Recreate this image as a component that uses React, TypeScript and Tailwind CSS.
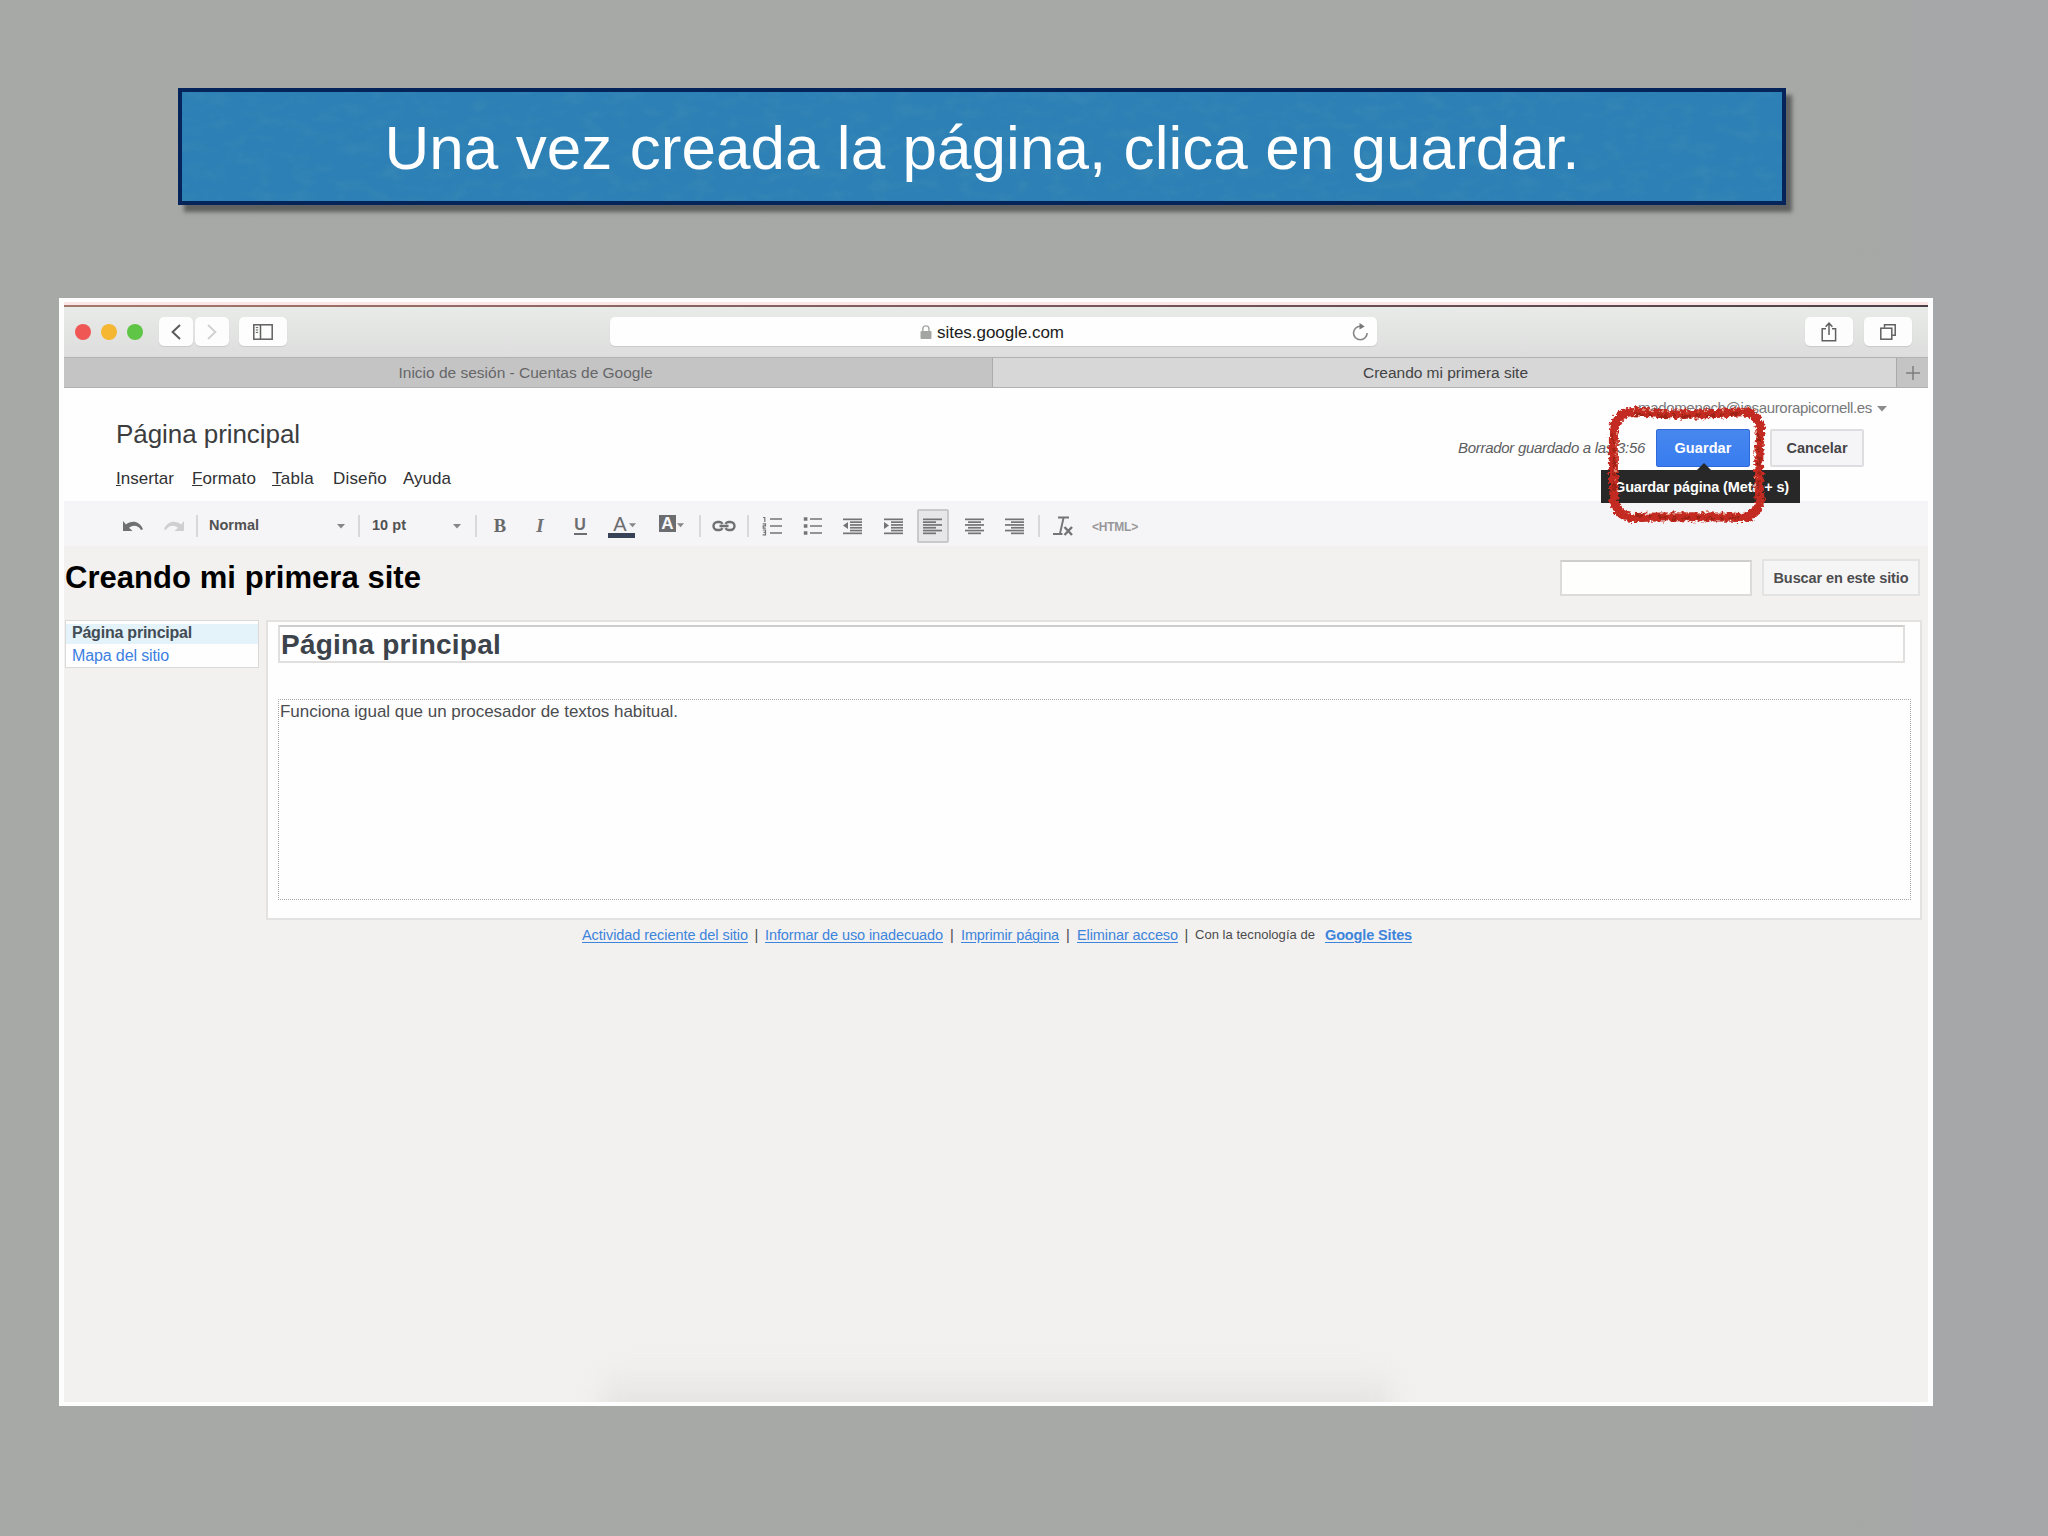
import { useLayoutEffect, useRef, useState } from "react";
import type { ReactNode } from "react";

/** Single-line label whose tracking is tuned so the text spans exactly `w` pixels. */
function Label({ w, className = "", children }: { w: number; className?: string; children: ReactNode }) {
  const ref = useRef<HTMLSpanElement>(null);
  const [tracking, setTracking] = useState(0);
  useLayoutEffect(() => {
    const el = ref.current;
    if (!el) return;
    const natural = el.getBoundingClientRect().width;
    const count = (el.textContent || "").length;
    setTracking((w - natural) / count);
  }, [w]);
  return (
    <span ref={ref} className={"inline-block shrink-0 whitespace-pre " + className} style={{ letterSpacing: tracking + "px" }}>
      {children}
    </span>
  );
}

function Sep({ className = "" }: { className?: string }) {
  return <div className={"h-[22px] w-[2px] shrink-0 bg-[#d8d7da] " + className} />;
}

function Caret({ className = "" }: { className?: string }) {
  return (
    <svg viewBox="0 0 8 5" className={"h-[5px] w-2 shrink-0 " + className}>
      <path d="M0 0h8L4 4.6z" fill="#868688" />
    </svg>
  );
}

function Lines({ rows, className = "" }: { rows: [number, number][]; className?: string }) {
  return (
    <svg viewBox="0 0 20 18" className={"h-[18px] w-5 shrink-0 " + className}>
      {rows.map(([x, w], i) => (
        <rect key={i} x={x} y={1.5 + i * 2.8} width={w} height="1.7" fill="#747477" />
      ))}
    </svg>
  );
}

function Banner() {
  return (
    <div className="relative ml-[178px] mt-[88px] flex h-[117px] w-[1608px] shrink-0 justify-center border-4 border-[#05255a] bg-[#2d80b5] shadow-[6px_7px_4px_rgba(72,74,74,0.75)]">
      <svg className="absolute inset-0 h-full w-full">
        <filter id="paper" x="0" y="0" width="100%" height="100%">
          <feTurbulence type="fractalNoise" baseFrequency="0.045 0.08" numOctaves="4" seed="8" />
          <feColorMatrix values="0 0 0 0 0.05  0 0 0 0 0.27  0 0 0 0 0.47  2.6 0 0 0 -1.15" />
        </filter>
        <rect width="100%" height="100%" filter="url(#paper)" opacity="0.36" />
      </svg>
      <h1 className="relative text-[62px] leading-[111px] text-white">
        <Label w={1195}>Una vez creada la página, clica en guardar.</Label>
      </h1>
    </div>
  );
}

function SafariBar() {
  return (
    <div className="flex h-[50px] shrink-0 items-start bg-gradient-to-b from-[#e9ebe9] to-[#dcdddc] pl-[11px] pt-[10px]">
      <div className="mt-[7px] flex gap-[10px]">
        <div className="size-4 rounded-full bg-[#ee5754]" />
        <div className="size-4 rounded-full bg-[#f5b731]" />
        <div className="size-4 rounded-full bg-[#5fc546]" />
      </div>
      <div className="ml-4 flex gap-[2px]">
        <div className="flex h-[29px] w-[34px] items-center justify-center rounded-[5px] bg-[#fcfdfc] shadow-[0_1px_1px_#c9cac9]">
          <svg viewBox="0 0 10 16" className="h-4 w-[10px]">
            <path d="M9 1 1.6 8 9 15" fill="none" stroke="#5a5b5a" strokeWidth="2" />
          </svg>
        </div>
        <div className="flex h-[29px] w-[34px] items-center justify-center rounded-[5px] bg-[#fcfdfc] shadow-[0_1px_1px_#c9cac9]">
          <svg viewBox="0 0 10 16" className="h-4 w-[10px]">
            <path d="M1 1 8.4 8 1 15" fill="none" stroke="#cfd0cf" strokeWidth="1.8" />
          </svg>
        </div>
      </div>
      <div className="ml-[10px] flex h-[29px] w-12 items-center justify-center rounded-[5px] bg-[#fcfdfc] shadow-[0_1px_1px_#c9cac9]">
        <svg viewBox="0 0 20 16" className="h-4 w-5" fill="none" stroke="#5f605f" strokeWidth="1.5">
          <rect x="0.8" y="0.8" width="18.4" height="14.4" />
          <path d="M7.5 1v14" />
          <path d="M2.8 3.600h2.400M2.800 6h2.400M2.800 8.400h2.400" strokeWidth="1" />
        </svg>
      </div>
      <div className="ml-[323px] flex h-[29px] w-[767px] items-start rounded-[5px] bg-[#fdfefd] shadow-[0_1px_1px_#c9cac9]">
        <svg viewBox="0 0 12 14" className="ml-[310px] mt-2 h-[14px] w-3">
          <path d="M2.8 7V4a3.1 3.1 0 0 1 6.2 0v3" fill="none" stroke="#a3a5a3" strokeWidth="1.4" />
          <rect x="0.5" y="6" width="11" height="8" rx="1" fill="#a3a5a3" />
        </svg>
        <Label w={127} className="ml-[5px] text-[17px] leading-8 text-[#1c1c1c]">
          sites.google.com
        </Label>
        <svg viewBox="0 0 16 18" className="ml-[288px] mt-[6px] h-[18px] w-4">
          <path d="M8.3 3.2a6.8 6.8 0 1 0 6.8 6.8" fill="none" stroke="#858785" strokeWidth="1.6" />
          <path d="M7.5 0v6.6l5.2-3.2z" fill="#777977" />
        </svg>
      </div>
      <div className="ml-[428px] flex h-[29px] w-12 items-center justify-center rounded-[5px] bg-[#fcfdfc] shadow-[0_1px_1px_#c9cac9]">
        <svg viewBox="0 0 16 20" className="h-5 w-4" fill="none" stroke="#5f605f" strokeWidth="1.5">
          <path d="M5 6.8H1.2v12h13.4v-12H11M8 13V1.5M4.6 4.8 8 1.2l3.4 3.6" />
        </svg>
      </div>
      <div className="ml-[11px] flex h-[29px] w-12 items-center justify-center rounded-[5px] bg-[#fcfdfc] shadow-[0_1px_1px_#c9cac9]">
        <svg viewBox="0 0 16 16" className="size-4" fill="none" stroke="#5f605f" strokeWidth="1.5">
          <rect x="0.8" y="4.2" width="11" height="11" />
          <path d="M4.5 3.8V.8h10.7v10.4h-3" />
        </svg>
      </div>
    </div>
  );
}

function TabStrip() {
  return (
    <div className="flex h-[31px] shrink-0 border-y border-[#b1b1b2] text-[15.5px] leading-[29px]">
      <div className="flex w-[929px] justify-center border-r border-[#acacad] bg-[#c4c4c5] pr-[5px] text-[#666768]">
        <Label w={254}>Inicio de sesión - Cuentas de Google</Label>
      </div>
      <div className="flex w-[904px] justify-center border-r border-[#a9a9aa] bg-[#d7d7d8] pl-[2px] text-[#434344]">
        <Label w={165}>Creando mi primera site</Label>
      </div>
      <div className="flex w-[31px] items-center justify-center bg-[#c4c4c5]">
        <svg viewBox="0 0 14 14" className="size-[14px]">
          <path d="M7 0v14M0 7h14" stroke="#7d7d7e" strokeWidth="1.5" />
        </svg>
      </div>
    </div>
  );
}

function EditorHeader() {
  return (
    <div className="relative flex h-[113px] shrink-0 justify-between bg-[#fefefe]">
      <div className="flex flex-col pl-[52px]">
        <Label w={184} className="mt-[30px] self-start text-[26px] leading-8 text-[#3b3d3f]">
          Página principal
        </Label>
        <div className="mt-[18px] flex text-[17px] leading-[22px] text-[#303133]">
          <Label w={58} className="mr-[18px]"><u>I</u>nsertar</Label>
          <Label w={64} className="mr-[16px]"><u>F</u>ormato</Label>
          <Label w={42} className="mr-[19px]"><u>T</u>abla</Label>
          <Label w={54} className="mr-[16px]">Diseño</Label>
          <Label w={48}>Ayuda</Label>
        </div>
      </div>
      <div className="flex flex-col items-end">
        <div className="mr-[41px] mt-[10px] flex h-5 items-center text-[15px] leading-5 text-[#77787a]">
          <Label w={234}>madomenech@iesaurorapicornell.es</Label>
          <svg viewBox="0 0 10 6" className="ml-[5px] mt-[1px] h-[6px] w-[10px]">
            <path d="M0 0h10L5 5.6z" fill="#8c8c8e" />
          </svg>
        </div>
        <div className="mr-16 mt-[11px] flex items-start text-[14.5px] leading-9">
          <Label w={187} className="mr-[11px] text-[15px] italic leading-[37px] text-[#5c5d5f]">Borrador guardado a las 3:56</Label>
          <div className="mr-5 flex h-[38px] w-[94px] justify-center rounded-[2px] border border-[#3069da] bg-gradient-to-b from-[#4787ee] to-[#387cf0] font-bold text-white">
            <Label w={57}>Guardar</Label>
          </div>
          <div className="flex h-[38px] w-[94px] justify-center rounded-[2px] border-2 border-[#dedddf] bg-[#f5f4f6] font-bold leading-[34px] text-[#454547]">
            <Label w={61}>Cancelar</Label>
          </div>
        </div>
      </div>
      <div className="absolute left-[1537px] top-[82px] flex h-[33px] w-[199px] bg-[#282828] pl-[13px] text-[14.5px] font-bold leading-[34px] text-white">
        <svg viewBox="0 0 16 8" className="absolute -top-[7px] left-[95px] h-2 w-4">
          <path d="M8 0 16 8H0z" fill="#282828" />
        </svg>
        <Label w={175}>Guardar página (Meta + s)</Label>
      </div>
      <svg viewBox="0 0 176 136" className="absolute left-[1534px] top-[8px] h-[136px] w-[176px]">
        <defs>
          <filter id="crayon" x="-5%" y="-5%" width="110%" height="110%">
            <feTurbulence type="fractalNoise" baseFrequency="0.3" numOctaves="3" seed="5" result="n" />
            <feDisplacementMap in="SourceGraphic" in2="n" scale="7" xChannelSelector="R" yChannelSelector="G" />
          </filter>
        </defs>
        <g fill="none" filter="url(#crayon)">
          <path
            d="M34 15.5Q90 21 146 15.5Q160 18 162.500 32Q159 70 162 104Q160 119 146 121.500Q90 120 34 121.500Q19 120 16 104Q15 70 15.500 34Q18 18 34 15.500z"
            stroke="#c32c20"
            strokeWidth="9"
          />
          <path
            d="M36 18Q90 23 144 17M36 119Q90 124 144 121M14 38Q18 70 15 100M160 36Q163 70 159 100"
            stroke="#9c2415"
            strokeWidth="2.500"
            strokeDasharray="9 5 4 6"
          />
          <path
            d="M34 13Q90 18 146 13M34 118Q90 116 146 118M19 36Q17 70 19 100M158 34Q156 70 158 100"
            stroke="#e59a84"
            strokeWidth="1.500"
            strokeDasharray="3 8 2 5"
          />
        </g>
      </svg>
    </div>
  );
}

function Toolbar() {
  return (
    <div className="flex h-[45px] shrink-0 items-center bg-[#f5f4f6] pl-[58px] pt-[4px] text-[14.5px] font-bold text-[#515153]">
      <svg viewBox="0 0 22 12" className="h-3 w-[22px] shrink-0">
        <path d="M1 1v10h9.5L7 7.8C11 4.6 16 5 19 10l2-.8C18 1 9.500 -.5 4 4.500z" fill="#6f7073" />
      </svg>
      <svg viewBox="0 0 22 12" className="ml-[19px] h-3 w-[22px] shrink-0">
        <path d="M21 1v10h-9.500L15 7.800C11 4.600 6 5 3 10l-2-.8C4 1 12.500 -.5 18 4.500z" fill="#cfcfd1" />
      </svg>
      <Sep className="ml-[11px]" />
      <Label w={50} className="ml-[11px]">Normal</Label>
      <Caret className="ml-[78px] mt-[1px]" />
      <Sep className="ml-[13px]" />
      <Label w={34} className="ml-[12px]">10 pt</Label>
      <Caret className="ml-[47px] mt-[1px]" />
      <Sep className="ml-[14px]" />
      <span className="ml-4 w-[14px] text-center font-['Liberation_Serif'] text-[18.5px] leading-5 text-[#66676a]">B</span>
      <span className="ml-[25px] w-[16px] text-center font-['Liberation_Serif'] text-[19px] italic leading-5 text-[#707174]">I</span>
      <span className="ml-[25px] flex w-[14px] flex-col items-center text-[16px] leading-[15px] text-[#6c6d70]">
        U
        <span className="mt-[1px] h-[2px] w-[13px] bg-[#6c6d70]" />
      </span>
      <div className="ml-[21px] mt-[3px] flex w-7 flex-col">
        <div className="flex items-end">
          <span className="ml-[4px] w-[16px] text-center text-[20px] font-normal leading-[17px] text-[#6c6d70]">A</span>
          <Caret className="mb-[5px] ml-[1px] w-[7px]" />
        </div>
        <div className="h-[5px] w-[27px] bg-[#384256]" />
      </div>
      <div className="-mt-[5px] ml-[23px] flex items-center">
        <span className="flex h-[17px] w-[17px] items-center justify-center bg-[#6c6d70] text-[17px] leading-[17px] text-[#f8f7f9]">A</span>
        <Caret className="ml-[1px] mt-[5px] w-[7px]" />
      </div>
      <Sep className="ml-[15px]" />
      <svg viewBox="0 0 24 12" className="ml-[11px] h-3 w-6 shrink-0" fill="none" stroke="#6f7073" strokeWidth="2.4">
        <path d="M10.500 3.800A4 4 0 0 0 7.500 2H5.500a4 4 0 0 0 0 8H7.500A4 4 0 0 0 10.500 8.200M13.500 3.800A4 4 0 0 1 16.500 2h2a4 4 0 0 1 0 8h-2A4 4 0 0 1 13.500 8.200M7.500 6h9" />
      </svg>
      <Sep className="ml-[11px]" />
      <svg viewBox="0 0 20 20" className="ml-[13px] h-5 w-5 shrink-0" fill="none" stroke="#747477">
        <path d="M8 3h12M8 10h12M8 17h12" strokeWidth="1.7" />
        <path d="M1 1.500h1.800v4.500M.8 7.800h2.700v2.100H1.200v2.200h2.600M.8 14h2.700v4.800H.6M1.500 16.400h2" strokeWidth="1.200" />
      </svg>
      <svg viewBox="0 0 20 20" className="ml-[21px] h-5 w-5 shrink-0" fill="none" stroke="#747477">
        <path d="M7 3h12M7 10h12M7 17h12" strokeWidth="1.700" />
        <path d="M.8 3h3.600M.8 10h3.600M.8 17h3.600" strokeWidth="3.400" />
      </svg>
      <div className="relative ml-[20px] flex">
        <Lines rows={[[0, 19], [7, 12], [7, 12], [7, 12], [7, 12], [0, 19]]} />
        <svg viewBox="0 0 5 7" className="absolute left-0 top-[5px] h-[7px] w-[5px]"><path d="M5 0v7L0 3.500z" fill="#747477" /></svg>
      </div>
      <div className="relative ml-[21px] flex">
        <Lines rows={[[0, 19], [7, 12], [7, 12], [7, 12], [7, 12], [0, 19]]} />
        <svg viewBox="0 0 5 7" className="absolute left-0 top-[5px] h-[7px] w-[5px]"><path d="M0 0v7l5-3.500z" fill="#747477" /></svg>
      </div>
      <div className="ml-[13px] flex h-[34px] w-8 items-center justify-center rounded-[2px] border-2 border-[#c9c8cb] bg-[#e7e6e9]">
        <Lines rows={[[0, 19], [0, 13], [0, 19], [0, 13], [0, 19], [0, 13]]} />
      </div>
      <Lines className="ml-[16px]" rows={[[0, 19], [3, 13], [0, 19], [3, 13], [0, 19], [3, 13]]} />
      <Lines className="ml-[20px]" rows={[[0, 19], [6, 13], [0, 19], [6, 13], [0, 19], [6, 13]]} />
      <Sep className="ml-[13px]" />
      <svg viewBox="0 0 22 20" className="ml-[13px] h-5 w-[22px] shrink-0" fill="none" stroke="#747477">
        <path d="M5 1.500h11M0 18h9.500" strokeWidth="1.900" />
        <path d="M10.500 2 7 17.500" strokeWidth="1.900" />
        <path d="M11.500 11l7.500 8M19 11l-7.500 8" strokeWidth="2.400" />
      </svg>
      <Label w={46} className="ml-[17px] mt-[2px] text-[12px] text-[#98989a]">{"<HTML>"}</Label>
    </div>
  );
}

function SiteArea() {
  return (
    <div className="relative flex grow flex-col bg-[#f2f1ef]">
      <div className="flex h-[74px] shrink-0 items-start">
        <h2 className="ml-[1px] mt-[14px] w-[1495px] text-[31px] font-bold leading-[36px] text-black">
          <Label w={356}>Creando mi primera site</Label>
        </h2>
        <div className="mt-[14px] h-9 w-[192px] border-2 border-[#dcdbda] border-t-[#cfcecd] bg-[#fefefd]" />
        <div className="ml-[10px] mt-[13px] flex h-[37px] w-[158px] justify-center border-2 border-[#e4e3e3] bg-[#f6f5f6] text-[14.500px] font-bold leading-[34px] text-[#4d4d4f]">
          <Label w={135}>Buscar en este sitio</Label>
        </div>
      </div>
      <div className="flex items-start">
        <nav className="ml-[1px] flex h-12 w-[194px] flex-col border border-[#dad9d8] bg-[#fefefe] pt-[3px] text-[16px]">
          <div className="h-5 bg-[#e3f3f9] pl-[6px] leading-[18px]">
            <Label w={120} className="font-bold text-[#434c55]">Página principal</Label>
          </div>
          <div className="h-5 pl-[6px] leading-[24px]">
            <Label w={97} className="text-[#3b80e2]">Mapa del sitio</Label>
          </div>
        </nav>
        <main className="ml-[7px] flex h-[300px] w-[1656px] flex-col border-2 border-[#e3e2e1] bg-[#fefefe] pl-[10px] pt-[3px]">
          <div className="h-[38px] w-[1627px] border-2 border-[#e0dfde] border-t-[#d0cecd] text-[28px] font-bold leading-[35px] text-[#3c434b]">
            <Label w={221} className="pl-[1px]">Página principal</Label>
          </div>
          <div className="mt-9 h-[201px] w-[1633px] border border-dotted border-[#a9a7a8] pl-[1px] pt-[1px] text-[17px] leading-[22px] text-[#4a4c50]">
            <Label w={398}>Funciona igual que un procesador de textos habitual.</Label>
          </div>
        </main>
      </div>
      <footer className="ml-[518px] mt-[4px] flex text-[14.500px] leading-[22px] text-[#3d84dc]">
        <Label w={166} className="underline underline-offset-[2px]">Actividad reciente del sitio</Label>
        <span className="w-[17px] text-center text-[#4a4a4c]">|</span>
        <Label w={178} className="underline underline-offset-[2px]">Informar de uso inadecuado</Label>
        <span className="w-[18px] text-center text-[#4a4a4c]">|</span>
        <Label w={98} className="underline underline-offset-[2px]">Imprimir página</Label>
        <span className="w-[18px] text-center text-[#4a4a4c]">|</span>
        <Label w={101} className="underline underline-offset-[2px]">Eliminar acceso</Label>
        <span className="w-[17px] text-center text-[#4a4a4c]">|</span>
        <Label w={120} className="text-[13px] text-[#4a4a4c]">Con la tecnología de</Label>
        <Label w={87} className="ml-[10px] font-bold underline underline-offset-[2px]">Google Sites</Label>
      </footer>
      <div className="absolute inset-x-0 bottom-0 flex h-[60px] justify-center overflow-hidden pl-[2px]">
        <div className="mt-6 h-[70px] w-[790px] bg-gradient-to-b from-[#f0efed] to-[#dddcda] blur-[12px]" />
      </div>
    </div>
  );
}

export default function App() {
  return (
    <div className="flex h-[1536px] w-[2048px] flex-col overflow-hidden bg-gradient-to-r from-[#a7a9a6] from-90% to-[#a6a7a9] to-95% font-['Liberation_Sans',Arial,sans-serif]">
      <Banner />
      <div className="ml-[59px] mt-[93px] flex h-[1108px] w-[1874px] shrink-0 flex-col border-x-[5px] border-y-4 border-[#fdfdfd] bg-white">
        <div className="h-[3px] shrink-0 bg-[#fbe6e6]" />
        <div className="h-[2px] shrink-0 bg-gradient-to-r from-[#a5786c] via-[#7b565c] to-[#4c4048]" />
        <SafariBar />
        <TabStrip />
        <EditorHeader />
        <Toolbar />
        <SiteArea />
      </div>
    </div>
  );
}
